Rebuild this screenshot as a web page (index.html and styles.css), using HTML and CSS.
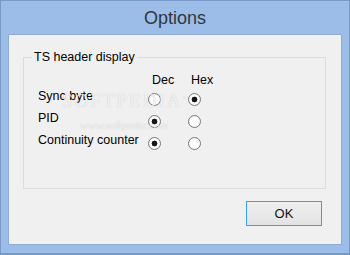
FILE: index.html
```html
<!DOCTYPE html>
<html>
<head>
<meta charset="utf-8">
<link rel="stylesheet" href="styles.css">
</head>
<body>
<div class="window">
  <div class="titlebar">Options</div>
  <div class="client">
    <fieldset class="group">
      <legend class="group-title">TS header display</legend>
      <div class="grid">
        <span></span><span class="col-head dec">Dec</span><span class="col-head hex">Hex</span>
        <span class="label">Sync byte</span>
        <input class="radio" type="radio" name="sync">
        <input class="radio" type="radio" name="sync" checked>
        <span class="label">PID</span>
        <input class="radio" type="radio" name="pid" checked>
        <input class="radio" type="radio" name="pid">
        <span class="label">Continuity counter</span>
        <input class="radio" type="radio" name="cc" checked>
        <input class="radio" type="radio" name="cc">
      </div>
    </fieldset>
    <div class="actions">
      <button class="btn" type="button">OK</button>
    </div>
    <div class="watermark">SOFTPEDIA<sup class="reg">®</sup></div>
    <div class="watermark-url">www.softpedia.com</div>
  </div>
</div>
</body>
</html>
```

FILE: styles.css
```css
html, body {
  margin: 0;
  padding: 0;
}
body {
  width: 350px;
  height: 255px;
  font-family: "Liberation Sans", Arial, sans-serif;
  font-size: 12.5px;
  color: #000;
}
.window {
  box-sizing: border-box;
  width: 350px;
  height: 255px;
  background: #9bbde8;
  border: 1px solid #7898c6;
  border-bottom-width: 2px;
  display: flex;
  flex-direction: column;
}
.titlebar {
  height: 33px;
  line-height: 35px;
  text-align: center;
  font-size: 18px;
  color: #2f3640;
}
.client {
  position: relative;
  flex: 1;
  margin: 0 7px 8px 7px;
  border: 1px solid #8fabd6;
  background: #f0f0f0;
  display: flex;
  flex-direction: column;
}
.group {
  margin: 14px 15px 0 14px;
  padding: 7px 0 34px 0;
  border: 1px solid #dcdcdc;
  min-width: 0;
}
.group-title {
  padding: 0 2px;
  margin-left: 8px;
  line-height: 16px;
  font-size: 12.5px;
}
.grid {
  display: grid;
  grid-template-columns: 110px 40px 40px;
  grid-template-rows: 16px 22px 22px 22px;
  margin-left: 14px;
}
.col-head {
  line-height: 16px;
}
.dec { padding-left: 4px; }
.hex { padding-left: 3px; }
.label {
  line-height: 16px;
  align-self: start;
  white-space: nowrap;
}
.radio {
  -webkit-appearance: none;
  appearance: none;
  box-sizing: border-box;
  width: 13px;
  height: 13px;
  margin: 0;
  align-self: center;
  border-radius: 50%;
  border: 1px solid #7a7a7a;
  background: radial-gradient(circle at 50% 50%, #ffffff 0 4px, #f2f2f2 6px);
}
.radio:checked {
  background: radial-gradient(circle at 50% 50%, #151515 0 2.6px, #ffffff 3.2px 4px, #f2f2f2 6px);
}
.actions {
  display: flex;
  justify-content: flex-end;
  padding: 12px 19px 0 0;
}
.btn {
  box-sizing: border-box;
  width: 76px;
  height: 25px;
  margin: 0;
  padding: 0;
  border: 1px solid #3c9cfa;
  background: linear-gradient(#efefef, #e3e3e3);
  font-family: "Liberation Sans", Arial, sans-serif;
  font-size: 13px;
  color: #111;
}
.watermark {
  position: absolute;
  left: 53px;
  top: 55px;
  font-family: "Liberation Serif", serif;
  font-size: 19px;
  letter-spacing: 2px;
  color: rgba(255, 255, 255, 0.75);
  text-shadow: 0 0 1px rgba(150, 150, 150, 0.55);
  pointer-events: none;
}
.reg {
  font-size: 6px;
}
.watermark-url {
  position: absolute;
  left: 71px;
  top: 84px;
  font-family: "Liberation Serif", serif;
  font-size: 11px;
  color: rgba(255, 255, 255, 0.7);
  text-shadow: 0 0 1px rgba(150, 150, 150, 0.5);
  pointer-events: none;
}
```
